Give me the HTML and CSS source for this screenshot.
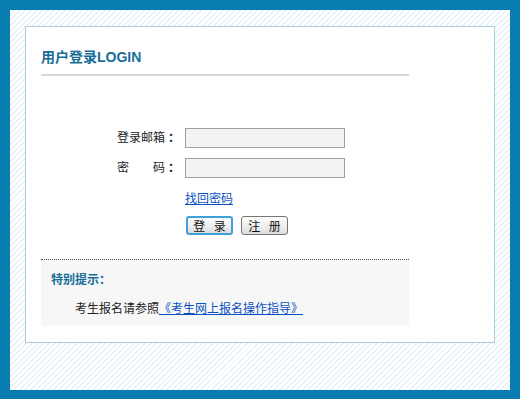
FILE: index.html
```html
<!DOCTYPE html>
<html lang="zh-CN">
<head>
    <meta charset="UTF-8">
    <title>用户登录</title>
    <link rel="stylesheet" href="styles.css">
</head>
<body>
<div class="frame">
    <div class="panel">
        <h2 class="title">用户登录LOGIN</h2>

        <form class="login">
            <div class="row">
                <label class="lab" for="email">登录邮箱<span class="colon">：</span></label>
                <input type="text" class="ipt" id="email">
            </div>
            <div class="row">
                <label class="lab" for="pwd">密<span class="gap"></span>码<span class="colon">：</span></label>
                <input type="password" class="ipt" id="pwd">
            </div>
            <div class="row row-link">
                <a href="#" class="link">找回密码</a>
            </div>
            <div class="row row-btn">
                <input type="button" value="登 录" class="btn btn-on">
                <input type="button" value="注 册" class="btn">
            </div>
        </form>

        <div class="tip">
            <h3 class="tip-title">特别提示：</h3>
            <p class="tip-text">考生报名请参照<a href="#" class="link">《考生网上报名操作指导》</a></p>
        </div>
    </div>
</div>
</body>
</html>
```

FILE: styles.css
```css
*{
    margin: 0;
    padding: 0;
    box-sizing: border-box;
}
body{
    font-family: "Liberation Sans", "Noto Sans CJK SC", sans-serif;
    font-size: 12px;
    color: #222;
}
.frame{
    width: 520px;
    height: 399px;
    border: 10px solid #097cb0;
    border-bottom-width: 9px;
    padding: 16px 15px 0 15px;
    background: repeating-linear-gradient(135deg, #fff 0, #fff 2.6px, #e6f0fa 2.6px, #e6f0fa 4px);
}
.panel{
    width: 470px;
    height: 317px;
    background-color: #fff;
    border: 1px solid #a9cbd8;
    padding: 20px 0 0 15px;
}
.title{
    width: 368px;
    font-size: 14px;
    line-height: 20px;
    font-weight: bold;
    color: #186d98;
    padding-bottom: 7px;
    border-bottom: 2px solid #d9d9d9;
}
.login{
    padding: 52px 0 0 76px;
}
.row{
    display: flex;
    align-items: center;
    height: 20px;
    margin-bottom: 10px;
}
.lab{
    width: 68px;
    line-height: 20px;
}
.colon{
    display: inline-block;
    font-weight: bold;
    margin-left: 3px;
}
.gap{
    display: inline-block;
    width: 24px;
}
.ipt{
    width: 160px;
    height: 20px;
    border: 1px solid #a0a0a0;
    background-color: #f3f3f3;
    outline: none;
}
.row-link{
    padding-left: 68px;
    height: 14px;
    margin: 12px 0 12px;
}
.link{
    color: #0b50c4;
    text-decoration: underline;
}
.row-btn{
    padding-left: 69px;
    height: 19px;
    margin-bottom: 24px;
}
.btn{
    width: 47px;
    height: 19px;
    margin-right: 8px;
    font-family: "Noto Sans CJK SC", sans-serif;
    font-size: 12px;
    line-height: 15px;
    letter-spacing: 3px;
    text-indent: 3px;
    color: #111;
    border: 1px solid #767676;
    border-radius: 3px;
    background: linear-gradient(#fdfdfd, #ececec 60%, #dcdcdc);
}
.btn-on{
    border: 2px solid #3ea0dc;
}
.tip{
    width: 368px;
    height: 67px;
    border-top: 1px dotted #555;
    background-color: #f7f7f7;
    padding: 12px 0 0 10px;
}
.tip-title{
    font-size: 12px;
    line-height: 16px;
    font-weight: bold;
    color: #186d98;
}
.tip-text{
    padding: 13px 0 0 24px;
    line-height: 16px;
}
```
